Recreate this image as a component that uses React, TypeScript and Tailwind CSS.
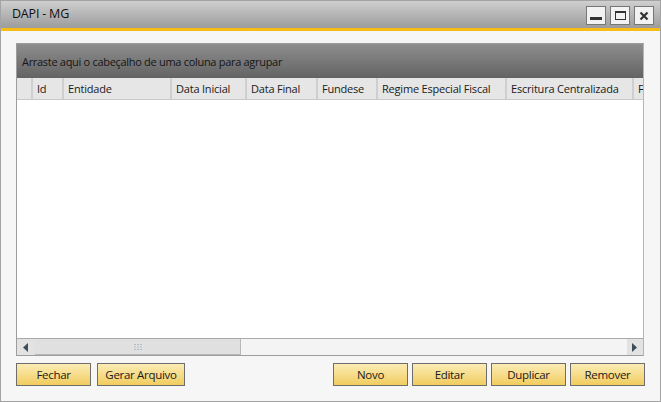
import React from "react";

const cols = [
  { label: "Id", w: 31 },
  { label: "Entidade", w: 108 },
  { label: "Data Inicial", w: 75 },
  { label: "Data Final", w: 71 },
  { label: "Fundese", w: 60 },
  { label: "Regime Especial Fiscal", w: 129 },
  { label: "Escritura Centralizada", w: 127 },
  { label: "Fechamento", w: 80 },
];

function Btn({ label, w }: { label: string; w: string }) {
  return (
    <button
      className={`${w} h-[23px] border border-[#6e6e6e] bg-gradient-to-b from-[#fbecb4] to-[#f1cd5c] text-[11.5px] text-[#1a1a1a] leading-none flex items-center justify-center tracking-[-0.3px]`}
    >
      {label}
    </button>
  );
}

export default function App() {
  return (
    <div
      className="w-[661px] h-[402px] bg-white"
      style={{ fontFamily: '"Open Sans", "Noto Sans", sans-serif' }}
    >
      <div className="w-[661px] h-[402px] border border-[#a3a3a3] bg-[#f6f6f6] flex flex-col">
        {/* Title bar */}
        <div className="h-[27px] bg-gradient-to-b from-[#cfcfcf] to-[#9c9c9c] flex items-center pl-[11px] pr-[6px] shrink-0">
          <span className="text-[12.5px] text-[#111] tracking-[-0.2px]">DAPI - MG</span>
          <div className="ml-auto flex gap-[4px] pt-[2px]">
            <div className="w-[20px] h-[19px] border border-[#777] bg-[#f2f2f2] flex items-center justify-center">
              <div className="w-[12px] h-[3px] bg-[#333] mt-[5px]" />
            </div>
            <div className="w-[20px] h-[19px] border border-[#777] bg-[#f2f2f2] flex items-center justify-center">
              <div className="w-[11px] h-[9px] border border-t-[2px] border-[#333]" />
            </div>
            <div className="w-[20px] h-[19px] border border-[#777] bg-[#f2f2f2] flex items-center justify-center">
              <svg width="10" height="10" viewBox="0 0 10 10">
                <path d="M1.5 1.5 L8.5 8.5 M8.5 1.5 L1.5 8.5" stroke="#333" strokeWidth="2.2" />
              </svg>
            </div>
          </div>
        </div>
        <div className="h-[3px] bg-[#f7bd14] shrink-0" />

        {/* Body */}
        <div className="flex-1 flex flex-col px-[15px] pt-[12px]">
          {/* Grid */}
          <div className="w-[628px] h-[313px] border border-[#9d9d9d] border-r-[#b5b5b5] bg-white flex flex-col overflow-hidden">
            <div className="h-[34px] bg-gradient-to-b from-[#8e8e8e] to-[#636363] flex items-end pl-[5px] pb-[11px] shrink-0">
              <span className="text-[11px] text-[#151515] leading-none tracking-[-0.3px]">
                Arraste aqui o cabeçalho de uma coluna para agrupar
              </span>
            </div>
            <div className="h-[22px] bg-[#e6e6e6] border-b border-[#c9c9c9] flex shrink-0 overflow-hidden">
              <div className="w-[16px] shrink-0 border-r-2 border-[#cfcfcf]" />
              {cols.map((c) => (
                <div
                  key={c.label}
                  style={{ width: c.w }}
                  className="shrink-0 border-r-2 border-[#cfcfcf] flex items-center pl-[4px] pt-[1px] text-[11px] text-[#1a1a1a] tracking-[-0.2px] whitespace-nowrap"
                >
                  {c.label}
                </div>
              ))}
            </div>
            <div className="flex-1" />
            {/* Scrollbar */}
            <div className="h-[17px] border-t border-[#a9a9a9] bg-[#f4f4f4] flex shrink-0">
              <div className="w-[18px] h-full bg-[#e2e2e2] flex items-center justify-center">
                <svg width="6" height="9" viewBox="0 0 6 9">
                  <path d="M5 0 L0 4.5 L5 9 Z" fill="#3d4d5a" />
                </svg>
              </div>
              <div className="w-[206px] h-full bg-[#e0e0e0] border-r border-[#b8b8b8] border-b border-b-[#b8b8b8] flex items-center justify-center">
                <svg width="8" height="6" viewBox="0 0 8 6">
                  <g fill="#b0bcc8">
                    <rect x="0" y="0" width="2" height="1" />
                    <rect x="3" y="0" width="2" height="1" />
                    <rect x="6" y="0" width="2" height="1" />
                    <rect x="0" y="2.5" width="2" height="1" />
                    <rect x="3" y="2.5" width="2" height="1" />
                    <rect x="6" y="2.5" width="2" height="1" />
                    <rect x="0" y="5" width="2" height="1" />
                    <rect x="3" y="5" width="2" height="1" />
                    <rect x="6" y="5" width="2" height="1" />
                  </g>
                </svg>
              </div>
              <div className="flex-1" />
              <div className="w-[16px] h-full bg-[#e2e2e2] flex items-center justify-center">
                <svg width="6" height="9" viewBox="0 0 6 9">
                  <path d="M0 0 L5 4.5 L0 9 Z" fill="#3d4d5a" />
                </svg>
              </div>
            </div>
          </div>

          {/* Buttons */}
          <div className="flex mt-[7px]">
            <div className="flex gap-[6px]">
              <Btn label="Fechar" w="w-[75px]" />
              <Btn label="Gerar Arquivo" w="w-[88px]" />
            </div>
            <div className="ml-auto flex gap-[4px]">
              <Btn label="Novo" w="w-[75px]" />
              <Btn label="Editar" w="w-[75px]" />
              <Btn label="Duplicar" w="w-[75px]" />
              <Btn label="Remover" w="w-[75px]" />
            </div>
          </div>
        </div>
      </div>
    </div>
  );
}
